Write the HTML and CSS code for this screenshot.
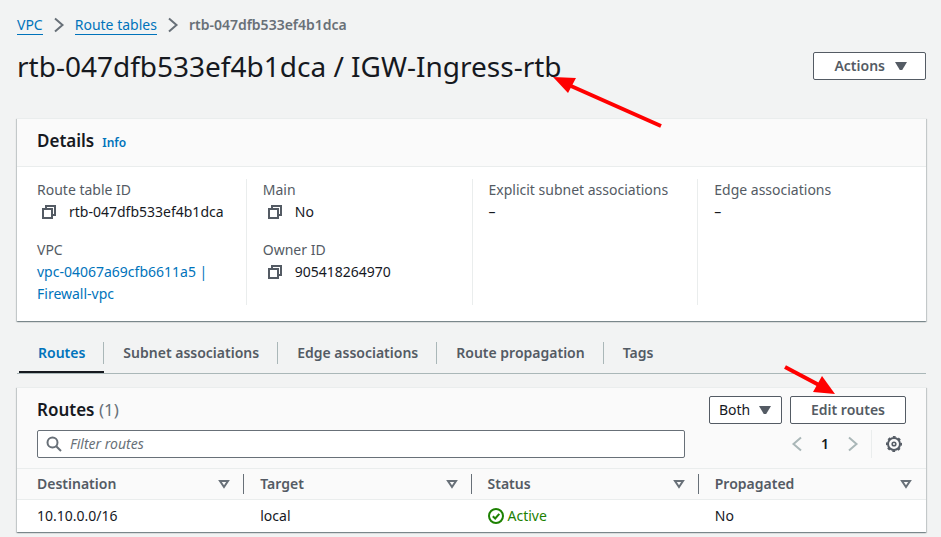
FILE: index.html
```html
<!DOCTYPE html>
<html lang="en">
<head>
<meta charset="utf-8">
<meta name="viewport" content="width=device-width, initial-scale=1">
<title>rtb-047dfb533ef4b1dca | Route tables</title>
<link rel="stylesheet" href="styles.css">
</head>
<body>
<svg class="defs" width="0" height="0" aria-hidden="true">
  <symbol id="chevron" viewBox="0 0 16 16"><path d="M4 1.500 L11.500 8 L4 14.500"/></symbol>
  <symbol id="copy" viewBox="0 0 16 16"><path d="M2 5h9v9H2zM5 5V2h9v9h-3"/></symbol>
  <symbol id="sort" viewBox="0 0 16 16"><path d="M4 5h8l-4 6z"/></symbol>
</svg>

<nav class="breadcrumbs" aria-label="Breadcrumbs">
  <a href="#vpc">VPC</a>
  <svg class="chevron"><use href="#chevron"/></svg>
  <a href="#route-tables">Route tables</a>
  <svg class="chevron"><use href="#chevron"/></svg>
  <span class="current">rtb-047dfb533ef4b1dca</span>
</nav>

<header class="page-header">
  <h1>rtb-047dfb533ef4b1dca / IGW-Ingress-rtb
    <svg class="pointer pointer-title" viewBox="0 0 110 52" aria-hidden="true"><path d="M18 9 108 49"/><polygon points="0,0 23,1 15,16"/></svg>
  </h1>
  <button class="btn" type="button">Actions <span class="caret"></span></button>
</header>

<main>
  <section class="card">
    <div class="card-head"><h2>Details</h2><a class="info" href="#info">Info</a></div>
    <div class="details">
      <dl>
        <div><dt>Route table ID</dt><dd class="copyable"><button class="icon-btn" type="button" aria-label="Copy route table ID"><svg class="line"><use href="#copy"/></svg></button>rtb-047dfb533ef4b1dca</dd></div>
        <div><dt>VPC</dt><dd><a href="#vpc-id">vpc-04067a69cfb6611a5 |<br>Firewall-vpc</a></dd></div>
      </dl>
      <dl>
        <div><dt>Main</dt><dd class="copyable"><button class="icon-btn" type="button" aria-label="Copy main"><svg class="line"><use href="#copy"/></svg></button>No</dd></div>
        <div><dt>Owner ID</dt><dd class="copyable"><button class="icon-btn" type="button" aria-label="Copy owner ID"><svg class="line"><use href="#copy"/></svg></button>905418264970</dd></div>
      </dl>
      <dl><div><dt>Explicit subnet associations</dt><dd>–</dd></div></dl>
      <dl><div><dt>Edge associations</dt><dd>–</dd></div></dl>
    </div>
  </section>

  <div class="tabs" role="tablist">
    <button type="button" role="tab" aria-selected="true">Routes</button>
    <button type="button" role="tab" aria-selected="false">Subnet associations</button>
    <button type="button" role="tab" aria-selected="false">Edge associations</button>
    <button type="button" role="tab" aria-selected="false">Route propagation</button>
    <button type="button" role="tab" aria-selected="false">Tags</button>
  </div>

  <section class="card">
    <div class="toolbar">
      <div class="toolbar-row">
        <h2>Routes <span class="count">(1)</span></h2>
        <div class="actions">
          <div class="select">
            <select aria-label="Route type"><option>Both</option></select>
            <span class="caret"></span>
          </div>
          <button class="btn" type="button">Edit routes</button>
          <svg class="pointer pointer-edit" viewBox="0 0 54 32" aria-hidden="true"><path d="M2 3 36 21"/><polygon points="52,30 39,12 30,28"/></svg>
        </div>
      </div>
      <div class="toolbar-row">
        <div class="search">
          <svg viewBox="0 0 16 16"><circle cx="6.500" cy="6.500" r="5"/><path d="M10.200 10.200 15 15"/></svg>
          <input type="search" placeholder="Filter routes" aria-label="Filter routes">
        </div>
        <div class="pager">
          <button class="icon-btn muted flip" type="button" aria-label="Previous page"><svg class="line"><use href="#chevron"/></svg></button>
          <span class="page">1</span>
          <button class="icon-btn muted" type="button" aria-label="Next page"><svg class="line"><use href="#chevron"/></svg></button>
          <span class="rule"></span>
          <button class="icon-btn" type="button" aria-label="Preferences"><svg class="line" viewBox="0 0 16 16"><circle cx="8" cy="8" r="6"/><circle class="teeth" cx="8" cy="8" r="7.200" pathLength="80"/><circle class="hub" cx="8" cy="8" r="1.800"/></svg></button>
        </div>
      </div>
    </div>
    <table>
      <thead>
        <tr>
          <th scope="col"><div>Destination<button class="sort" type="button" aria-label="Sort by destination"><svg class="line"><use href="#sort"/></svg></button></div></th>
          <th scope="col"><div>Target<button class="sort" type="button" aria-label="Sort by target"><svg class="line"><use href="#sort"/></svg></button></div></th>
          <th scope="col"><div>Status<button class="sort" type="button" aria-label="Sort by status"><svg class="line"><use href="#sort"/></svg></button></div></th>
          <th scope="col"><div>Propagated<button class="sort" type="button" aria-label="Sort by propagated"><svg class="line"><use href="#sort"/></svg></button></div></th>
        </tr>
      </thead>
      <tbody>
        <tr>
          <td>10.10.0.0/16</td>
          <td>local</td>
          <td><span class="status"><svg viewBox="0 0 16 16"><circle cx="8" cy="8" r="7"/><path d="M4.800 8.200 7.200 10.500 11.300 5.800"/></svg>Active</span></td>
          <td>No</td>
        </tr>
      </tbody>
    </table>
  </section>
</main>
</body>
</html>
```

FILE: styles.css
```css
* { box-sizing: border-box; }

body {
  margin: 0;
  padding: 14px 15px 4px 17px;
  background: #f2f3f3;
  color: #16191f;
  font: 14px/22px "Noto Sans", "Open Sans", sans-serif;
}

h1, h2, dl, dd { margin: 0; }
a { color: #0073bb; text-decoration: none; }
button, input, select { font: inherit; color: inherit; margin: 0; }
button { cursor: pointer; }
svg { flex: none; fill: none; stroke: currentColor; stroke-width: 2; }
.defs { position: absolute; }

.breadcrumbs { display: flex; align-items: center; gap: 8px; }
.breadcrumbs a { border-bottom: 1px solid #0073bb; line-height: 18px; }
.breadcrumbs .chevron { width: 16px; height: 16px; color: #687078; }
.breadcrumbs .current { color: #687078; font-weight: 600; }

.page-header {
  display: flex;
  justify-content: space-between;
  align-items: center;
  padding: 12px 0 34px;
}
h1 { position: relative; font-size: 28px; line-height: 36px; font-weight: 400; }

.btn {
  display: flex;
  align-items: center;
  gap: 10px;
  height: 28px;
  padding: 0 20px;
  background: #fff;
  border: 1px solid #545b64;
  border-radius: 2px;
  color: #545b64;
  font-weight: 600;
}
.page-header .btn { padding-right: 18px; }
.caret {
  width: 12px;
  height: 8px;
  background: #545b64;
  clip-path: polygon(0 0, 100% 0, 60% 100%, 40% 100%);
}

.card {
  background: #fff;
  border-top: 1px solid #eaeded;
  box-shadow: 0 1px 1px 0 rgba(0, 28, 36, .3), 1px 1px 1px 0 rgba(0, 28, 36, .15), -1px 1px 1px 0 rgba(0, 28, 36, .15);
}
.card-head {
  display: flex;
  align-items: baseline;
  gap: 8px;
  padding: 11px 20px 14px;
  background: #fafafa;
  border-bottom: 1px solid #eaeded;
}
h2 { font-size: 17px; line-height: 22px; font-weight: 600; }
.info { font-size: 12px; line-height: 18px; font-weight: 600; }

.details {
  display: grid;
  grid-template-columns: repeat(4, 1fr);
  padding: 12px 3px 16px;
}
.details dl { display: grid; align-content: start; gap: 16px; padding-left: 17px; }
.details dl + dl { padding-left: 16px; border-left: 1px solid #eaeded; }
dt { color: #545b64; }
.copyable { display: flex; align-items: center; gap: 8px; }
.icon-btn {
  display: flex;
  padding: 0 4px;
  border: 0;
  background: none;
  color: #545b64;
}
.line { width: 16px; height: 16px; }
.muted { color: #aab7b8; }
.flip { transform: rotate(180deg); }
.teeth { stroke-dasharray: 5 5; stroke-dashoffset: 2; stroke-width: 1.600; }
.hub { stroke-width: 1.600; }

.tabs {
  display: flex;
  margin: 11px 0 13px;
  padding: 10px 0 0 2px;
  border-bottom: 1px solid #aab7b8;
}
.tabs button {
  position: relative;
  padding: 0 19px 9px;
  border: 0;
  background: none;
  color: #545b64;
  font-weight: 600;
}
.tabs button:not(:last-child)::before {
  content: "";
  position: absolute;
  top: 0;
  right: 0;
  height: 22px;
  border-right: 1px solid #aab7b8;
}
.tabs button[aria-selected="true"] { color: #0073bb; }
.tabs button[aria-selected="true"]::after {
  content: "";
  position: absolute;
  left: 0;
  right: 0;
  bottom: 0;
  height: 2px;
  background: #16191f;
}

.toolbar {
  display: grid;
  gap: 6px;
  padding: 8px 20px 10px;
  background: #fafafa;
}
.toolbar-row { display: flex; align-items: center; justify-content: space-between; gap: 24px; }
.count { color: #687078; font-weight: 400; }
.actions { position: relative; display: flex; gap: 8px; }
.select { position: relative; }
.select select {
  appearance: none;
  height: 28px;
  width: 73px;
  padding: 0 24px 0 9px;
  background: #fff;
  border: 1px solid #545b64;
  border-radius: 2px;
}
.select .caret { position: absolute; right: 11px; top: 10px; pointer-events: none; }

.search {
  display: flex;
  flex: 1;
  max-width: 648px;
  align-items: center;
  gap: 8px;
  height: 28px;
  padding: 0 8px;
  background: #fff;
  border: 1px solid #687078;
  border-radius: 2px;
  color: #687078;
}
.search svg { width: 16px; height: 16px; }
.search input {
  flex: 1;
  min-width: 0;
  padding: 0;
  border: 0;
  outline: 0;
  background: none;
}
.search input::placeholder { color: #687078; font-style: italic; opacity: 1; }

.pager { display: flex; align-items: center; }
.page { width: 32px; text-align: center; font-weight: 600; }
.rule { height: 28px; margin: 0 10px 0 6px; border-left: 1px solid #eaeded; }

table { width: 100%; table-layout: fixed; border-collapse: collapse; }
th {
  padding: 5px 0;
  background: #fafafa;
  border-top: 1px solid #eaeded;
  border-bottom: 1px solid #eaeded;
  color: #545b64;
  font-weight: 600;
  text-align: left;
}
th div {
  display: flex;
  align-items: center;
  justify-content: space-between;
  height: 20px;
  padding: 0 12px 0 16px;
}
th:not(:last-child) div { padding-right: 11px; border-right: 1px solid #687078; }
th:first-child div { padding-left: 20px; }
.sort { display: flex; padding: 0; border: 0; background: none; color: #687078; }
td { padding: 5px 16px; }
td:first-child { padding-left: 20px; }
.status { display: flex; align-items: center; gap: 4px; color: #1d8102; }
.status svg { width: 16px; height: 16px; }

.pointer { position: absolute; overflow: visible; stroke: #f00; stroke-width: 4; pointer-events: none; }
.pointer polygon { fill: #f00; stroke: none; }
.pointer-title { left: 100%; top: 29px; width: 110px; height: 52px; margin-left: -9px; }
.pointer-edit { right: 69px; bottom: 28px; width: 54px; height: 32px; }
```
